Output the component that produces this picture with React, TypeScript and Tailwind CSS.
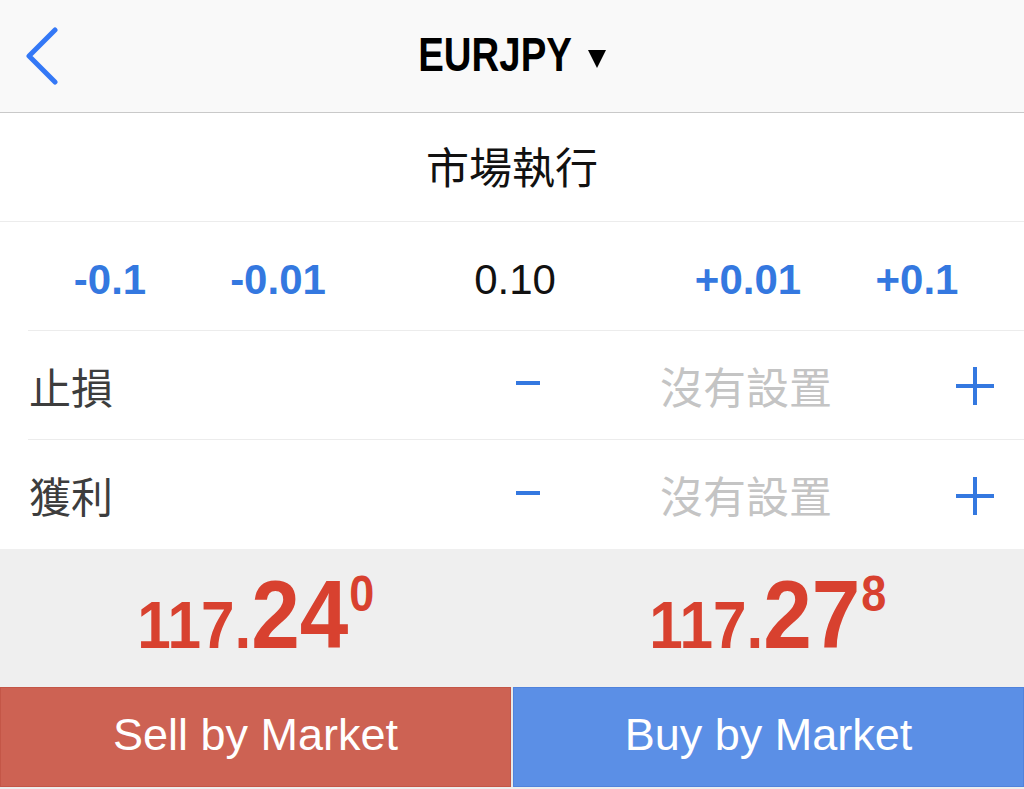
import React from 'react';

const CJK = "font-['Noto_Sans_CJK_TC','Noto_Sans',sans-serif]";
const SANS = "font-['Liberation_Sans',Arial,sans-serif]";

const lotSteps = [
  { label: '-0.1', w: 'w-[220px]', blue: true },
  { label: '-0.01', w: 'w-[116px]', blue: true },
  { label: '0.10', w: 'w-[358px]', blue: false },
  { label: '+0.01', w: 'w-[108px]', blue: true },
  { label: '+0.1', w: 'w-[230px]', blue: true },
];

function LevelRow({ label, last }: { label: string; last?: boolean }) {
  return (
    <div className={'ml-[28px] h-[109px] flex items-center ' + (last ? '' : 'border-b border-[#ececec]')}>
      <span className={CJK + ' text-[42px] text-[#3d3d3d] pl-[1px] w-[488px]'}>{label}</span>
      <span className="w-[24px] h-[4px] bg-[#3478e0] mt-[-4px]" />
      <span className={CJK + ' text-[43px] text-[#c4c4c4] ml-[120px] w-[295px]'}>沒有設置</span>
      <svg width="40" height="40" viewBox="0 0 40 40" className="mt-[2px]">
        <path d="M20 1v38M1 20h38" stroke="#3478e0" strokeWidth="4" />
      </svg>
    </div>
  );
}

function Price({ head, big, sup }: { head: string; big: string; sup: string }) {
  return (
    <div className="flex-1 flex justify-center">
      <div className={SANS + ' inline-flex items-baseline scale-x-[0.9] font-bold text-[#d8412f] leading-none'}>
        <span className="text-[67px]">{head}</span>
        <span className="text-[97px]">{big}</span>
        <span className="text-[50px] self-start mt-[3px] ml-[1px]">{sup}</span>
      </div>
    </div>
  );
}

export default function App() {
  return (
    <div className="w-[1024px] h-[789px] bg-white flex flex-col overflow-hidden">
      <header className="h-[113px] bg-[#f9f9f9] border-b border-[#c9c9c9] grid grid-cols-[1fr_auto_1fr] items-center">
        <div className="pl-[24px] flex items-center">
          <svg width="36" height="58" viewBox="0 0 36 58">
            <path d="M31 3L5 29l26 26" fill="none" stroke="#3478f6" strokeWidth="5" strokeLinecap="round" strokeLinejoin="round" />
          </svg>
        </div>
        <div className="flex items-center gap-[15px] mt-[-2px]">
          <span className={SANS + ' inline-block scale-x-[0.8] mx-[-19px] text-[48px] font-bold text-black'}>EURJPY</span>
          <svg width="18" height="20" viewBox="0 0 18 20" className="mt-[6px]">
            <path d="M0 2h18L9 20z" fill="#000" />
          </svg>
        </div>
        <div />
      </header>

      <div className="h-[109px] border-b border-[#ececec] flex items-center justify-center">
        <span className={CJK + ' text-[43px] text-[#111] mt-[-4px]'}>市場執行</span>
      </div>

      <div className="h-[109px] ml-[28px] border-b border-[#ececec] flex items-center">
        <div className="flex shrink-0 -ml-[28px] w-[1032px] items-center">
          {lotSteps.map((s) => (
            <span
              key={s.label}
              className={
                SANS + ' ' + s.w + ' shrink-0 text-center text-[42px] mt-[6px] ' +
                (s.blue ? 'text-[#3478e0] font-bold' : 'text-[#111]')
              }
            >
              {s.label}
            </span>
          ))}
        </div>
      </div>

      <LevelRow label="止損" />
      <LevelRow label="獲利" last />

      <div className="h-[138px] bg-[#efefef] flex pt-[17px]">
        <Price head="117." big="24" sup="0" />
        <Price head="117." big="27" sup="8" />
      </div>

      <div className="h-[100px] flex gap-[2px] bg-[#e8e8e8]">
        <button className={SANS + ' flex-1 bg-[#cd6253] border border-[#c45647] text-white text-[45px] pb-[4px]'}>
          Sell by Market
        </button>
        <button className={SANS + ' flex-1 bg-[#5b8fe6] border border-[#5083dc] text-white text-[45px] pb-[4px]'}>
          Buy by Market
        </button>
      </div>
      <div className="flex-1 bg-[#ededed]" />
    </div>
  );
}
